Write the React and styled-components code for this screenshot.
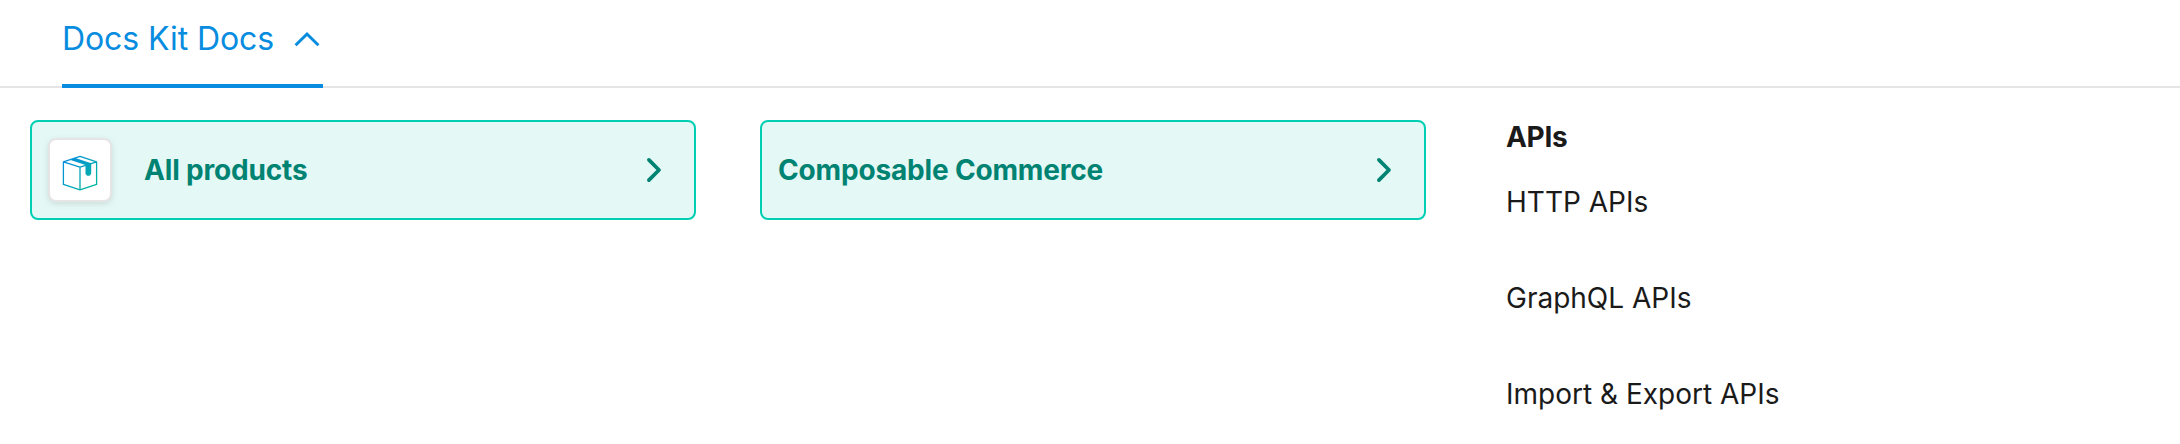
import React from "react";
import styled, { createGlobalStyle } from "styled-components";

const GlobalStyle = createGlobalStyle`
  *, *::before, *::after { box-sizing: border-box; }
  body {
    margin: 0;
    background: #fff;
    color: #1a1a1a;
    font-family: Inter, "Liberation Sans", sans-serif;
    overflow: hidden;
  }
`;

const Header = styled.nav`
  display: flex;
  height: 88px;
  padding-left: 62px;
  box-shadow: inset 0 -2px #e5e5e5;
`;

const MenuTab = styled.button`
  display: flex;
  align-items: flex-start;
  justify-content: space-between;
  width: 261px;
  height: 88px;
  padding: 19px 3px 0 0;
  border: 0;
  border-bottom: 4px solid #078cdf;
  background: none;
  color: #078cdf;
  font: 400 32px/40px Inter, "Liberation Sans", sans-serif;
  letter-spacing: -0.08px;
  white-space: nowrap;
`;

const TabChevron = styled.svg`
  width: 26px;
  height: 16px;
  margin-top: 12px;
`;

const Menu = styled.main`
  display: flex;
  align-items: flex-start;
  padding: 32px 0 0 30px;
`;

const Card = styled.a`
  display: flex;
  align-items: center;
  width: 666px;
  height: 100px;
  margin-right: 64px;
  padding: 0 32px 0 16px;
  border: 2px solid #00cfb4;
  border-radius: 8px;
  background: #e4f8f5;
  color: #008372;
`;

const CardIcon = styled.span`
  display: flex;
  align-items: center;
  justify-content: center;
  width: 64px;
  height: 64px;
  margin-right: 32px;
  padding-top: 6px;
  border: 2px solid #e5e5e5;
  border-radius: 8px;
  background: #fff;
  box-shadow: 0 2px 6px rgba(0, 0, 0, 0.11);
`;

const CardTitle = styled.span`
  flex: 1;
  font-size: 28px;
  font-weight: 700;
  line-height: 40px;
  letter-spacing: -0.17px;
  white-space: nowrap;
`;

const CardChevron = styled.svg`
  width: 16px;
  height: 26px;
`;

const Section = styled.section`
  padding: 1px 0 0 16px;
`;

const SectionTitle = styled.h2`
  margin: 0;
  font-size: 28px;
  font-weight: 700;
  line-height: 32px;
  letter-spacing: -0.3px;
`;

const LinkList = styled.ul`
  display: grid;
  gap: 64px;
  margin: 33px 0 0;
  padding: 0;
  list-style: none;
`;

const LinkItem = styled.li`
  font-size: 28px;
  line-height: 32px;
  white-space: nowrap;
`;

const BoxIcon = () => (
  <svg width="36" height="38" viewBox="0 0 36 38" fill="none">
    <defs>
      <linearGradient id="box" x1="4" y1="4" x2="32" y2="30" gradientUnits="userSpaceOnUse">
        <stop stopColor="#078cdf" />
        <stop offset="1" stopColor="#00b5a0" />
      </linearGradient>
    </defs>
    <path
      d="M18 2.4 34.6 7.8V30.4L18 35.8 1.4 30.4V7.8ZM1.4 7.8 18 13.2 34.6 7.8M18 13.2V35.8"
      stroke="url(#box)"
      strokeWidth="1.3"
      strokeLinejoin="round"
    />
    <path d="M7.8 5.8 13.3 4 29.2 9.2V19.7L27.6 21.7H25.2L23.5 19.9V11.1Z" fill="url(#box)" />
  </svg>
);

const NextIcon = () => (
  <CardChevron viewBox="0 0 16 26" fill="none">
    <path d="M2.9 2.9 13 13 2.9 23.1" stroke="currentColor" strokeWidth="3.7" strokeLinecap="round" strokeLinejoin="round" />
  </CardChevron>
);

const apis = ["HTTP APIs", "GraphQL APIs", "Import & Export APIs"];

export default function App() {
  return (
    <>
      <GlobalStyle />
      <Header>
        <MenuTab>
          Docs Kit Docs
          <TabChevron viewBox="0 0 26 16" fill="none">
            <path d="M1.6 14.2 13 3 24.4 14.2" stroke="currentColor" strokeWidth="3" />
          </TabChevron>
        </MenuTab>
      </Header>
      <Menu>
        <Card>
          <CardIcon>
            <BoxIcon />
          </CardIcon>
          <CardTitle>All products</CardTitle>
          <NextIcon />
        </Card>
        <Card>
          <CardTitle>Composable Commerce</CardTitle>
          <NextIcon />
        </Card>
        <Section>
          <SectionTitle>APIs</SectionTitle>
          <LinkList>
            {apis.map((name) => (
              <LinkItem key={name}>{name}</LinkItem>
            ))}
          </LinkList>
        </Section>
      </Menu>
    </>
  );
}
